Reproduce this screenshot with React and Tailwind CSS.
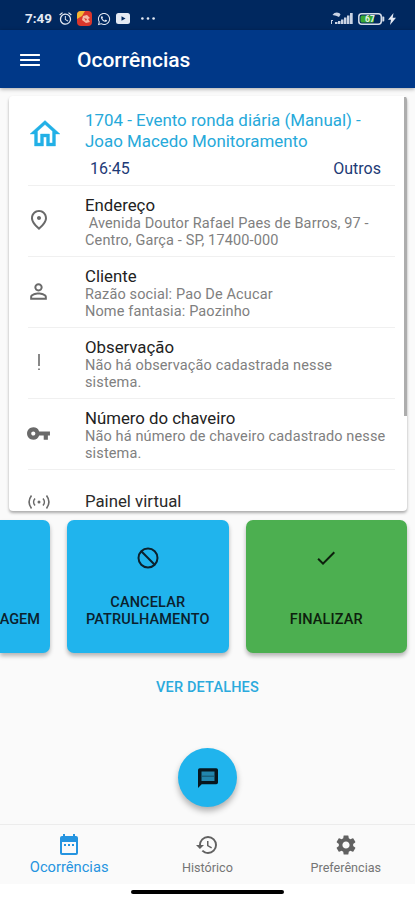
import {
  MdMenu,
  MdAlarm,
  MdOutlinePlace,
  MdPersonOutline,
  MdVpnKey,
  MdCheck,
  MdHistory,
  MdSettings,
} from 'react-icons/md'
import { FaWhatsapp } from 'react-icons/fa'

const details = [
  {
    icon: <MdOutlinePlace className="size-6" />,
    title: 'Endereço',
    lines: ['\u00a0Avenida Doutor Rafael Paes de Barros, 97 -', 'Centro, Garça - SP, 17400-000'],
  },
  {
    icon: <MdPersonOutline className="size-[25px]" />,
    title: 'Cliente',
    lines: ['Razão social: Pao De Acucar', 'Nome fantasia: Paozinho'],
  },
  {
    icon: <BangIcon />,
    title: 'Observação',
    lines: ['Não há observação cadastrada nesse', 'sistema.'],
  },
  {
    icon: <MdVpnKey className="size-[25px]" />,
    title: 'Número do chaveiro',
    lines: ['Não há número de chaveiro cadastrado nesse', 'sistema.'],
  },
]

export default function App() {
  return (
    <div className="flex h-[900px] w-[415px] flex-col overflow-hidden bg-[#fafafa] font-['Roboto',sans-serif]">
      <StatusBar />
      <header className="relative z-10 flex h-[58px] shrink-0 items-center bg-[#003888] pl-[18px] pt-px text-white shadow-[0_1px_4px_rgba(0,0,0,0.35)]">
        <MdMenu className="size-6 scale-x-[1.1]" />
        <h1 className="ml-[35px] mt-px text-[21px] font-medium leading-none">Ocorrências</h1>
      </header>

      <section className="relative ml-[9px] mt-2 h-[415px] w-[398px] shrink-0 overflow-hidden rounded-[4px] bg-white shadow-[0_2px_3px_rgba(0,0,0,0.32)]">
        <div className="ml-[19px] flex h-[90px] w-[367px] border-b border-[#f0f0f0]">
          <div className="flex w-[57px] shrink-0 items-start pt-5">
            <HomeIcon />
          </div>
          <div className="flex-1 pt-[14px]">
            <h2 className="whitespace-nowrap text-[16.9px] leading-[20.5px] text-[#26a9da]">
              1704 - Evento ronda diária (Manual) -<br />Joao Macedo Monitoramento
            </h2>
            <div className="mt-[7px] flex justify-between pl-[5px] pr-[14px] text-[16px] leading-[21px] text-[#1d3a76]">
              <span>16:45</span>
              <span>Outros</span>
            </div>
          </div>
        </div>
        {details.map(d => (
          <DetailRow key={d.title} {...d} />
        ))}
        <div className="ml-[19px] flex h-[62px] items-center pt-px text-[#6a6a6a]">
          <div className="flex w-[57px] shrink-0">
            <PanelIcon />
          </div>
          <h3 className="text-[16.8px] leading-[19px] text-[#2a2a2a]">Painel virtual</h3>
        </div>
        <div className="absolute right-[0.5px] top-px h-[319px] w-[3px] bg-[#adadad]" />
      </section>

      <div className="mt-[8.5px] flex h-[133.5px] shrink-0 gap-[17px]">
        <button className="flex w-[50px] shrink-0 items-end justify-end rounded-r-[7px] bg-[#20b4ed] pb-[25px] pr-[10px] text-[14.5px] font-medium leading-[17px] text-[#0b212d] shadow-[0_3px_4px_rgba(0,0,0,0.28)]">
          AGEM
        </button>
        <ActionButton className="bg-[#20b4ed] text-[#0b212d]" icon={<CancelIcon />}>
          CANCELAR<br />PATRULHAMENTO
        </ActionButton>
        <ActionButton className="bg-[#4caf50] text-[#0d200d]" icon={<MdCheck className="size-6" />}>
          FINALIZAR
        </ActionButton>
      </div>

      <div className="mt-[26px] text-center text-[14.5px] font-medium leading-[17px] tracking-[0.15px] text-[#2baadd]">
        VER DETALHES
      </div>

      <button className="mx-auto mt-[52px] flex size-[59px] shrink-0 items-center justify-center rounded-full bg-[#20b4ed] shadow-[0_4px_6px_rgba(0,0,0,0.3)]">
        <MessageIcon />
      </button>

      <nav className="mt-auto flex h-[60px] shrink-0 border-t border-[#ececec]">
        <Tab active icon={<CalendarIcon />} label="Ocorrências" />
        <Tab icon={<MdHistory className="size-6" />} label="Histórico" />
        <Tab icon={<MdSettings className="size-6" />} label="Preferências" />
      </nav>
      <div className="flex h-4 shrink-0 justify-center bg-white pt-[6px]">
        <div className="h-[3.5px] w-[153px] rounded-full bg-black" />
      </div>
    </div>
  )
}

function StatusBar() {
  return (
    <div className="flex h-[30px] shrink-0 items-center bg-[#00285f] pl-[25px] pr-[19px] pt-[7px] text-[#e4eaf4]">
      <span className="w-[33px] text-[13.5px] font-bold leading-none">7:49</span>
      <MdAlarm className="size-[15px]" />
      <svg className="ml-[4px] size-[15px]" viewBox="0 0 15 15">
        <rect width="15" height="15" rx="4" fill="#d9372c" />
        <path d="M0 8V4a4 4 0 0 1 4-4h4L5 5z" fill="#f2b632" />
        <path d="M6 5l4-1 3 3-2 1 2 3-4 1-4-3z" fill="#f4b9a4" />
        <path d="M7 7l3 1-1 2z" fill="#d9372c" />
      </svg>
      <FaWhatsapp className="ml-[5px] size-[14px]" />
      <svg className="ml-[5px] h-[11px] w-[14px]" viewBox="0 0 14 11">
        <rect width="14" height="11" rx="2.5" fill="currentColor" />
        <path d="M5.5 3.2v4.6l4-2.3z" fill="#00285f" />
      </svg>
      <svg className="ml-[11px] h-[3px] w-[14px]" viewBox="0 0 14 3" fill="currentColor">
        <circle cx="1.4" cy="1.5" r="1.3" />
        <circle cx="7" cy="1.5" r="1.3" />
        <circle cx="12.6" cy="1.5" r="1.3" />
      </svg>
      <svg className="ml-auto h-[13px] w-[22px]" viewBox="0 0 22 13" fill="#c9d3e4">
        <path d="M1.5 3C3.5-.2 8-.2 9.5 2.5L8 5 5 3.8z" />
        <path d="M0 8h2v1H1v3H0zM4 10h2.5v2H4zM7 9h2.500v3H7zM10 7.500h2.500V12H10zM13 5.500h2.500V12H13zM16 3.500h2.500V12H16zM19 1h2.700v11H19z" />
      </svg>
      <svg className="ml-[5px] h-[12px] w-[27px]" viewBox="0 0 27 12">
        <rect x="0.8" y="0.8" width="22.5" height="10.4" rx="3" fill="none" stroke="#d5dde9" strokeWidth="1.5" />
        <path d="M24.3 3.500h1a1 1 0 0 1 1 1v3a1 1 0 0 1-1 1h-1z" fill="#d5dde9" />
        <rect x="2.5" y="2.5" width="13.5" height="7" rx="1.5" fill="#38a832" />
        <text x="12" y="9" textAnchor="middle" fontSize="8.5" fontWeight="700" fill="#e6f2e6">67</text>
      </svg>
      <svg className="ml-[3px] h-[12px] w-[8px]" viewBox="0 0 8 12">
        <path d="M5.5 0L0 6.8h3L2 12l6-7.2H4.7z" fill="currentColor" />
      </svg>
    </div>
  )
}

function DetailRow({ icon, title, lines }) {
  return (
    <div className="ml-[19px] flex h-[71px] w-[367px] border-b border-[#f0f0f0] text-[#6a6a6a]">
      <div className="flex w-[57px] shrink-0 items-center pb-[2px]">
        <div className="flex w-[21px] justify-center *:shrink-0">{icon}</div>
      </div>
      <div className="pt-[9px]">
        <h3 className="text-[16.8px] leading-5 text-[#222]">{title}</h3>
        {lines.map(line => (
          <p key={line} className="whitespace-nowrap text-[14.5px] leading-[17px] tracking-[0.13px] text-[#808080]">{line}</p>
        ))}
      </div>
    </div>
  )
}

function ActionButton({ className, icon, children }) {
  return (
    <button className={`flex w-[161.5px] shrink-0 flex-col items-center justify-between rounded-[7px] pb-[25px] pt-[26px] text-[14.5px] font-medium leading-[17px] tracking-[0.15px] shadow-[0_3px_4px_rgba(0,0,0,0.28)] ${className}`}>
      {icon}
      <span>{children}</span>
    </button>
  )
}

function Tab({ icon, label, active }) {
  return (
    <div className={`flex flex-1 flex-col items-center pt-2 ${active ? 'text-[#2594e0]' : 'text-[#757575]'}`}>
      <div className={active ? '' : 'text-[#616161]'}>{icon}</div>
      <span className={active ? 'mt-px text-[14.7px] leading-[18px]' : 'mt-[2px] text-[12.6px] leading-[18px]'}>{label}</span>
    </div>
  )
}

function HomeIcon() {
  return (
    <svg className="-ml-px size-9 text-[#22b0e6]" viewBox="0 0 24 24" fill="currentColor" stroke="currentColor" strokeWidth="0.25">
      <path d="M12 5.690l5 4.500V18h-2v-6H9v6H7v-7.810l5-4.500M12 3L2 12h3v8h6v-6h2v6h6v-8h3L12 3z" />
    </svg>
  )
}

function BangIcon() {
  return (
    <svg className="h-[18px] w-1" viewBox="0 0 4 18" fill="currentColor">
      <path d="M1.2 1h1.6v12H1.2zM1.2 15.4h1.6V17H1.2z" />
    </svg>
  )
}

function PanelIcon() {
  return (
    <svg className="-ml-px h-[18px] w-6" viewBox="0 0 24 18" fill="none" stroke="currentColor" strokeWidth="1.6">
      <path d="M4.5 2.5c-3 4-3 9 0 13M19.5 2.5c3 4 3 9 0 13M8 5.5c-1.8 2-1.8 5 0 7M16 5.5c1.8 2 1.8 5 0 7" />
      <circle cx="12" cy="9" r="1.5" fill="currentColor" stroke="none" />
    </svg>
  )
}

function CancelIcon() {
  return (
    <svg className="size-6" viewBox="0 0 24 24" fill="none" stroke="currentColor" strokeWidth="2">
      <circle cx="12" cy="12" r="9.5" />
      <path d="M5.3 5.3l13.4 13.4" />
    </svg>
  )
}

function MessageIcon() {
  return (
    <svg className="size-[22px]" viewBox="0 0 22 22">
      <path d="M1 21V3A1.800 1.800 0 0 1 2.800 1.200h16.400A1.800 1.800 0 0 1 21 3v12.500a1.800 1.800 0 0 1-1.800 1.800H4.700z" fill="#07161e" />
      <path d="M4.500 4.500h13v9.500h-13z" fill="#2285ad" />
      <path d="M5 9.200h12" stroke="#155068" strokeWidth="1" />
    </svg>
  )
}

function CalendarIcon() {
  return (
    <svg className="size-6" viewBox="0 0 24 24" fill="currentColor">
      <path fillRule="evenodd" d="M19 3h-1V1h-2v2H8V1H6v2H5a2 2 0 0 0-2 2v15a2 2 0 0 0 2 2h14a2 2 0 0 0 2-2V5a2 2 0 0 0-2-2zm0 17H5V9h14z" />
      <path d="M7 11h2v2H7zM11 11h2v2h-2zM15 11h2v2h-2z" />
    </svg>
  )
}
